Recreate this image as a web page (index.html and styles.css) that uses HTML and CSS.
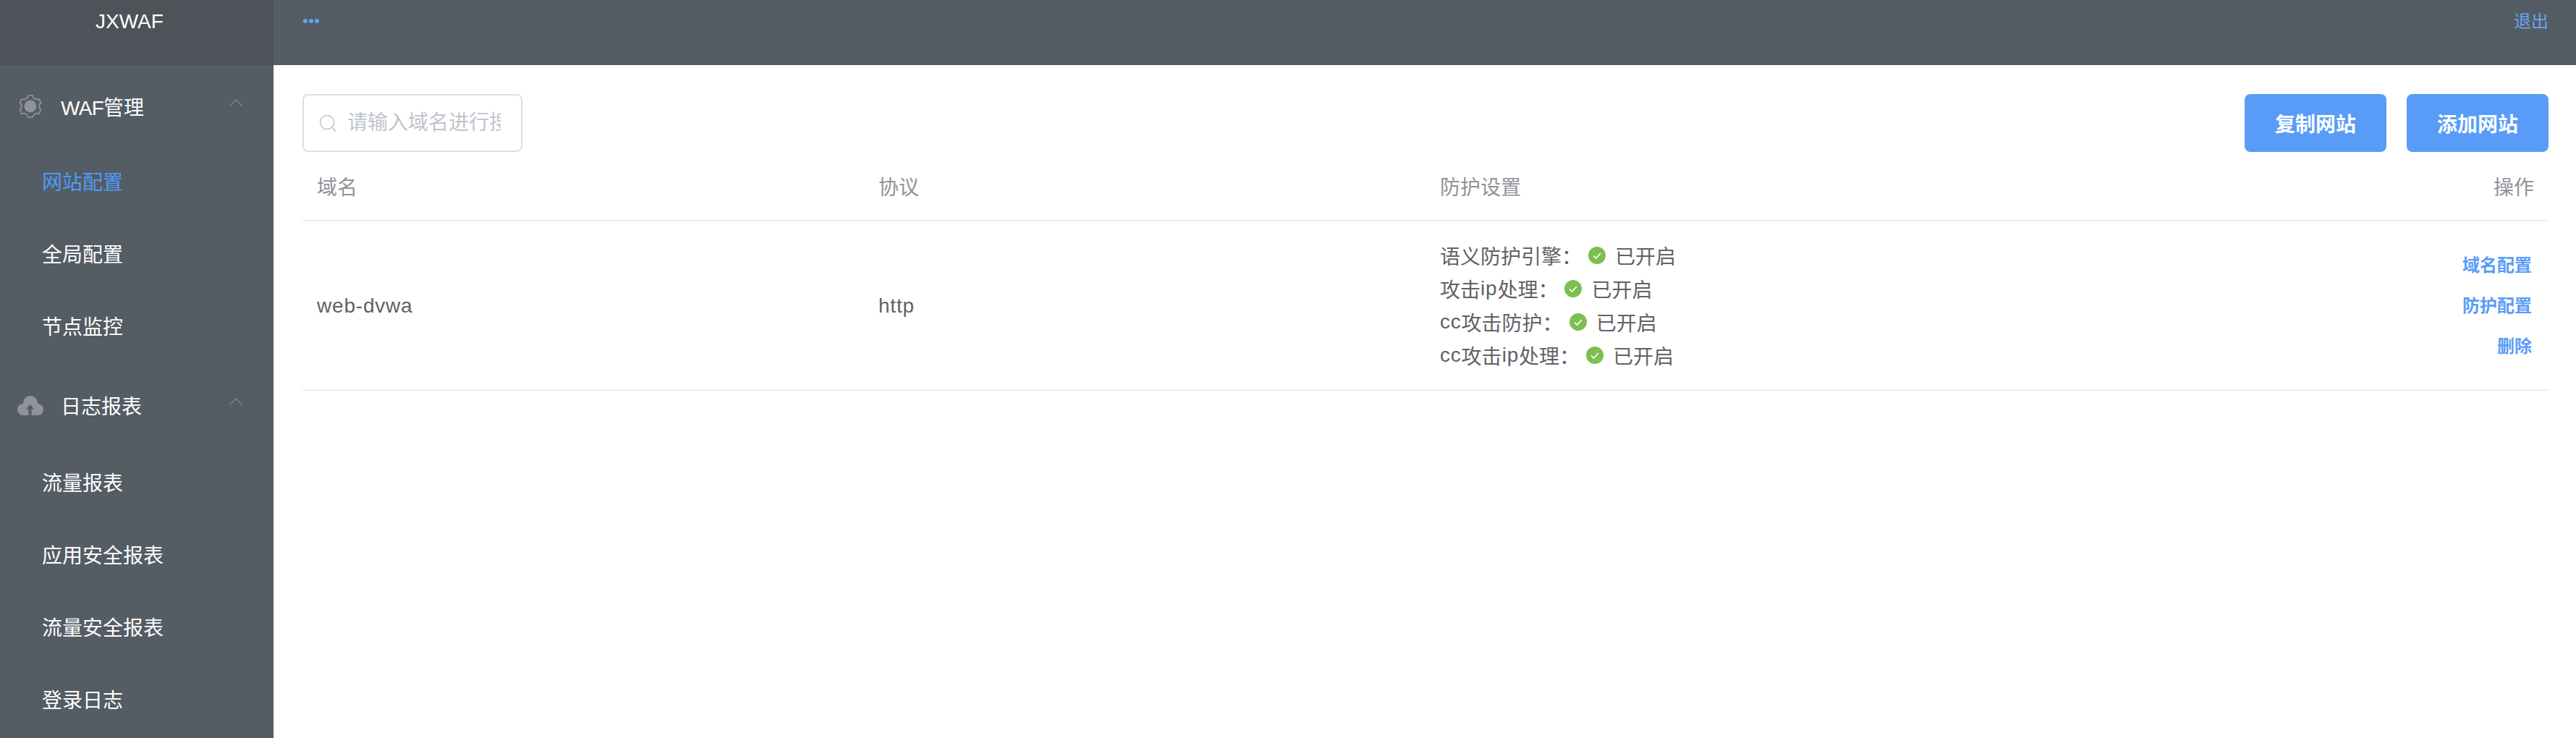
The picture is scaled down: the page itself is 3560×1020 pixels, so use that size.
FILE: index.html
```html
<!DOCTYPE html>
<html lang="zh-CN">
<head>
  <meta charset="UTF-8" />
  <title>JXWAF</title>
  <link rel="stylesheet" href="styles.css">
</head>
<body>

<div class="app">
  <aside class="sidebar">
    <div class="logo">JXWAF</div>

    <div class="menu-title menu-first">
      <svg class="icon-gear" viewBox="-16 -16 32 32">
        <polygon class="gear-ring" points="-4.28,11.75 -2.96,15.22 2.96,15.22 4.28,11.75 8.03,9.58 11.7,10.17 14.66,5.05 12.31,2.17 12.31,-2.17 14.66,-5.05 11.7,-10.17 8.03,-9.58 4.28,-11.75 2.96,-15.22 -2.96,-15.22 -4.28,-11.75 -8.03,-9.58 -11.7,-10.17 -14.66,-5.05 -12.31,-2.17 -12.31,2.17 -14.66,5.05 -11.7,10.17 -8.03,9.58" />
        <circle class="gear-core" r="8.4" />
      </svg>
      <span class="menu-label"><span class="narrow">WAF</span>管理</span>
      <svg class="chevron" viewBox="0 0 20 10"><path d="M1 9.5 10 1l9 8.5" /></svg>
    </div>
    <div class="menu-item active">网站配置</div>
    <div class="menu-item">全局配置</div>
    <div class="menu-item">节点监控</div>

    <div class="menu-title menu-second">
      <svg class="icon-cloud" viewBox="0 0 36 27">
        <g class="cloud">
          <circle cx="8" cy="19" r="8" />
          <circle cx="28" cy="19" r="8" />
          <circle cx="18" cy="10" r="10" />
          <rect x="8" y="14" width="20" height="13" />
        </g>
        <path class="cloud-arrow" d="M17.5 12 23 18.5h-3.5V27h-4v-8.5H12z" />
      </svg>
      <span class="menu-label">日志报表</span>
      <svg class="chevron" viewBox="0 0 20 10"><path d="M1 9.5 10 1l9 8.5" /></svg>
    </div>
    <div class="menu-item">流量报表</div>
    <div class="menu-item">应用安全报表</div>
    <div class="menu-item">流量安全报表</div>
    <div class="menu-item">登录日志</div>
  </aside>

  <div class="content">
    <header class="topbar">
      <svg class="more" viewBox="0 0 22 6">
        <circle cx="3" cy="3" r="3" />
        <circle cx="11" cy="3" r="3" />
        <circle cx="19" cy="3" r="3" />
      </svg>
      <a class="logout">退出</a>
    </header>

    <main class="main">
      <div class="toolbar">
        <div class="search">
          <svg class="search-icon" viewBox="0 0 24 24"><circle cx="11" cy="11" r="9.5" /><path d="m18 18 5 5.5" /></svg>
          <input type="text" placeholder="请输入域名进行搜索" />
        </div>
        <div class="actions">
          <button>复制网站</button>
          <button>添加网站</button>
        </div>
      </div>

      <div class="table-row table-head">
        <div class="cell">域名</div>
        <div class="cell">协议</div>
        <div class="cell">防护设置</div>
        <div class="cell cell-right">操作</div>
      </div>

      <div class="table-row">
        <div class="cell cell-text"><span class="latin">web-dvwa</span></div>
        <div class="cell cell-text"><span class="latin">http</span></div>
        <div class="cell">
          <div class="status">语义防护引擎：<svg class="check" viewBox="0 0 24 24"><circle cx="12" cy="12" r="12" /><path d="m7 12.5 3.5 3.5L17 9" /></svg>已开启</div>
          <div class="status">攻击<span class="latin">ip</span>处理：<svg class="check" viewBox="0 0 24 24"><circle cx="12" cy="12" r="12" /><path d="m7 12.5 3.5 3.5L17 9" /></svg>已开启</div>
          <div class="status"><span class="latin">cc</span>攻击防护：<svg class="check" viewBox="0 0 24 24"><circle cx="12" cy="12" r="12" /><path d="m7 12.5 3.5 3.5L17 9" /></svg>已开启</div>
          <div class="status"><span class="latin">cc</span>攻击<span class="latin">ip</span>处理：<svg class="check" viewBox="0 0 24 24"><circle cx="12" cy="12" r="12" /><path d="m7 12.5 3.5 3.5L17 9" /></svg>已开启</div>
        </div>
        <div class="cell cell-links">
          <a>域名配置</a>
          <a>防护配置</a>
          <a>删除</a>
        </div>
      </div>
    </main>
  </div>
</div>

</body>
</html>
```

FILE: styles.css
```css
body, html {
  margin: 0;
  padding: 0;
  height: 100%;
  overflow: hidden;
  font-family: "Liberation Sans", "Noto Sans CJK SC", sans-serif;
  font-size: 28px;
  background-color: #fff;
  color: #606266;
}

.app {
  display: flex;
  height: 100vh;
}

.sidebar {
  width: 378px;
  flex: none;
  background-color: #545c64;
  color: #fff;
  overflow: hidden;
}

.logo {
  height: 90px;
  box-sizing: border-box;
  padding-left: 132px;
  line-height: 60px;
  background-color: #4e5259;
}

.menu-title {
  display: flex;
  align-items: center;
  height: 112px;
  position: relative;
}

.menu-first {
  margin-top: 1px;
}

.menu-second {
  margin: 1px 0 3px;
}

.menu-label {
  position: absolute;
  left: 84px;
}

.narrow {
  letter-spacing: -0.7px;
}

.icon-gear {
  width: 32px;
  height: 32px;
  margin-left: 26px;
}

.gear-ring {
  fill: none;
  stroke: #8a8d94;
  stroke-width: 2;
  stroke-linejoin: round;
}

.gear-core {
  fill: #909399;
}

.icon-cloud {
  width: 36px;
  height: 27px;
  margin-left: 24px;
}

.cloud {
  fill: #909399;
}

.cloud-arrow {
  fill: #545c64;
}

.chevron {
  position: absolute;
  left: 316px;
  top: 46px;
  width: 20px;
  height: 10px;
  fill: none;
  stroke: #80858c;
  stroke-width: 1.5;
}

.menu-item {
  height: 100px;
  line-height: 100px;
  padding-left: 58px;
}

.menu-item.active {
  color: #4f9af7;
}

.content {
  flex: 1;
  display: flex;
  flex-direction: column;
}

.topbar {
  height: 90px;
  flex: none;
  display: flex;
  justify-content: space-between;
  box-sizing: border-box;
  padding: 0 38px 0 41px;
  background-color: #545c64;
}

.more {
  width: 22px;
  height: 6px;
  margin-top: 26px;
  fill: #66a3f2;
}

.logout {
  font-size: 24px;
  line-height: 60px;
  color: #66a3f2;
}

.main {
  padding: 40px 38px 0 40px;
}

.toolbar {
  display: flex;
  justify-content: space-between;
}

.search {
  width: 304px;
  height: 80px;
  box-sizing: border-box;
  display: flex;
  align-items: center;
  border: 2px solid #dcdfe6;
  border-radius: 8px;
  padding: 0 28px 0 21px;
}

.search-icon {
  width: 24px;
  height: 24px;
  flex: none;
  fill: none;
  stroke: #c0c4cc;
  stroke-width: 1.5;
}

.search input {
  flex: 1;
  min-width: 0;
  margin-left: 15px;
  padding: 0;
  border: none;
  outline: none;
  font: inherit;
}

.search input::placeholder {
  color: #c0c4cc;
}

.actions {
  display: flex;
  gap: 28px;
}

.actions button {
  width: 196px;
  height: 80px;
  border: none;
  border-radius: 8px;
  background-color: #589cf8;
  color: #fff;
  font: inherit;
  font-weight: 600;
}

.table-row {
  display: grid;
  grid-template-columns: repeat(4, 1fr);
  align-items: center;
  border-bottom: 2px solid #ebeef5;
  height: 234px;
  box-sizing: border-box;
}

.table-head {
  height: 96px;
  color: #909399;
}

.cell {
  padding: 0 20px;
}

.cell-text {
  padding-top: 2px;
}

.cell-right {
  text-align: right;
}

.latin {
  letter-spacing: 0.8px;
}

.status {
  display: flex;
  align-items: center;
  height: 46px;
}

.check {
  width: 24px;
  height: 24px;
  margin: 0 13px 0 9px;
}

.check circle {
  fill: #7cbf50;
}

.check path {
  fill: none;
  stroke: #fff;
  stroke-width: 1.6;
}

.cell-links {
  display: flex;
  flex-direction: column;
  align-items: flex-end;
  padding: 2px 23px 0 20px;
  gap: 22px;
  font-size: 24px;
  line-height: 34px;
  font-weight: 600;
  color: #589cf8;
}
```
